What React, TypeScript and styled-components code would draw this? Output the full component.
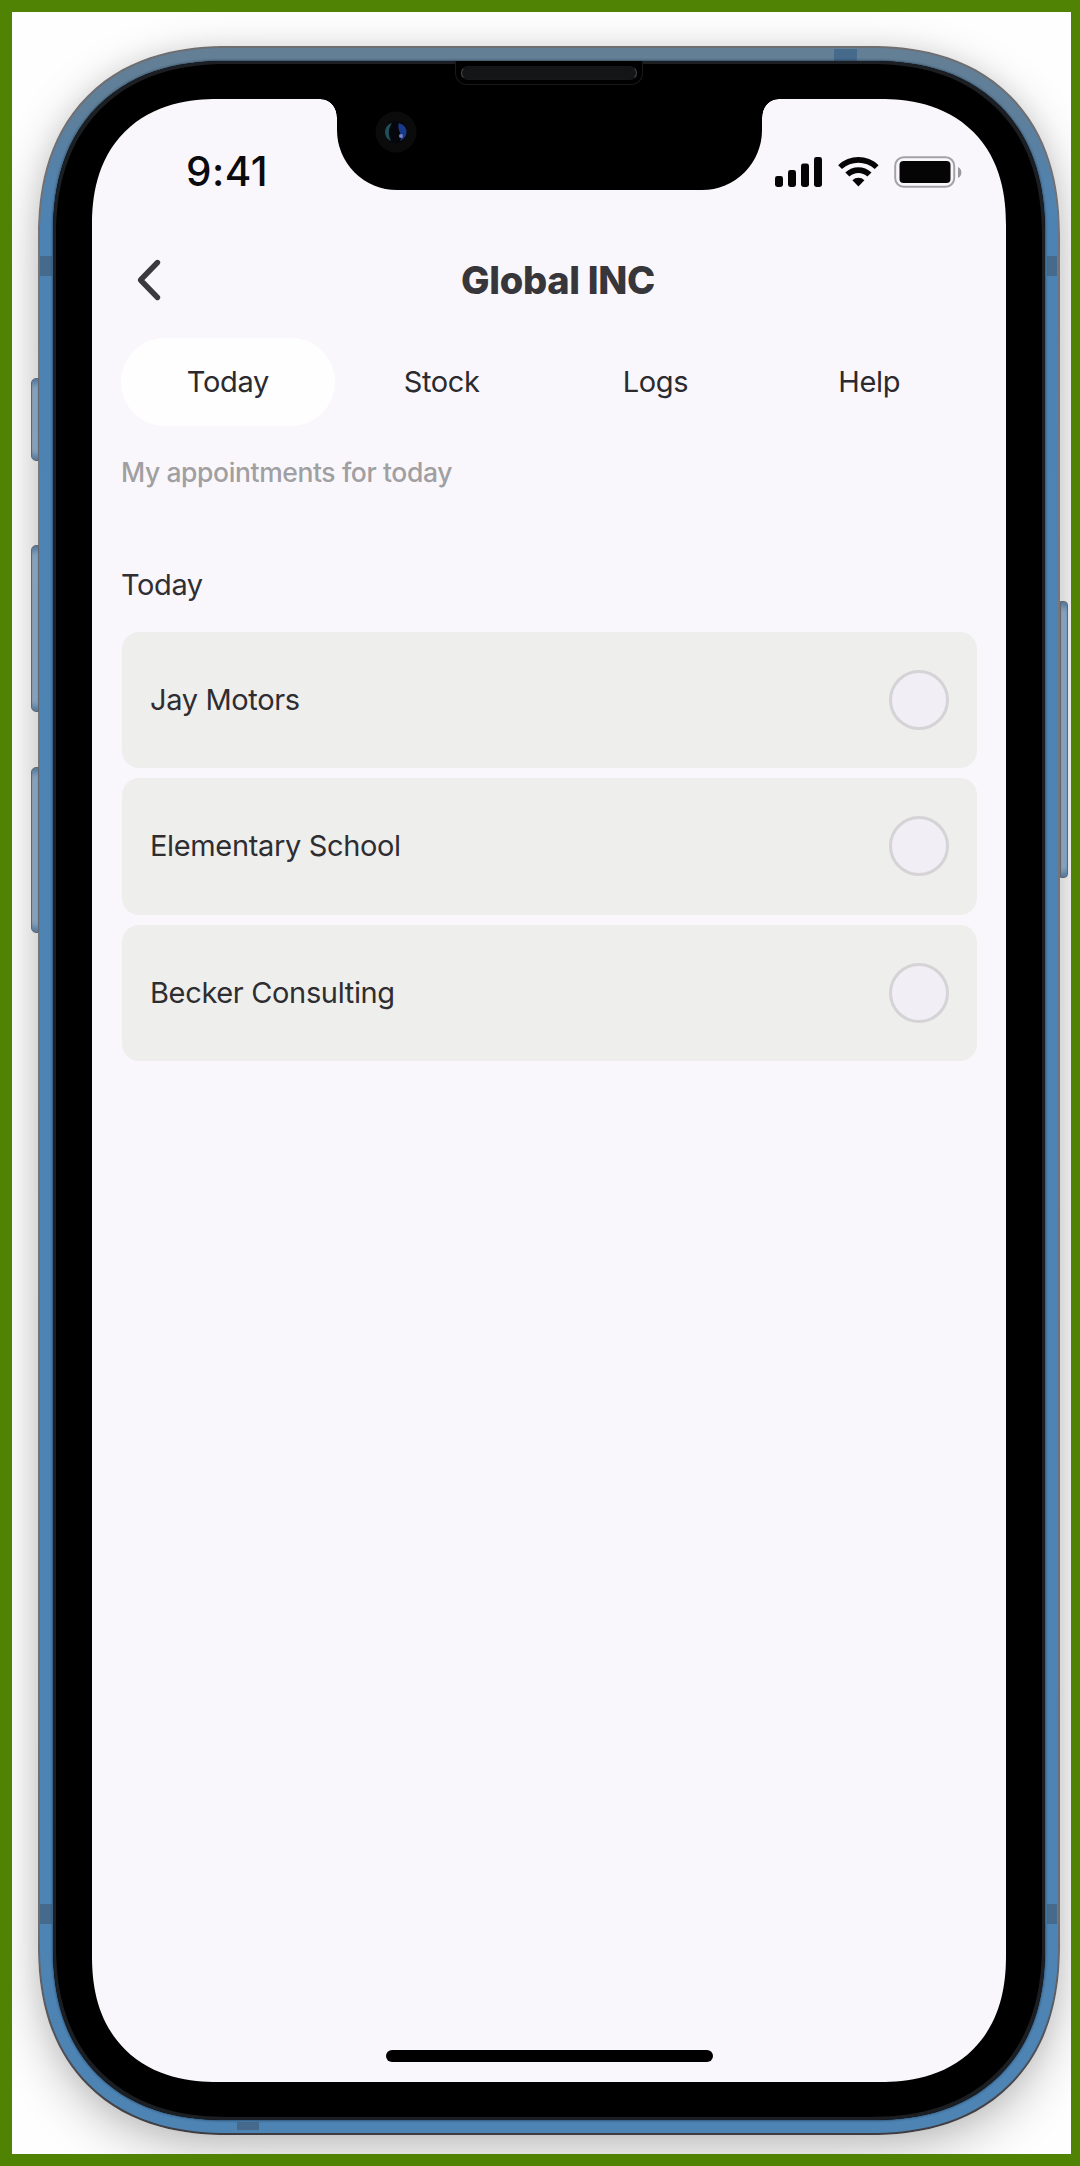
import React, { useState } from "react";
import styled, { createGlobalStyle } from "styled-components";

const GlobalStyle = createGlobalStyle`
  *, *::before, *::after { box-sizing: border-box; }
  body { margin: 0; }
  button { font: inherit; color: inherit; border: 0; background: none; padding: 0; }
`;

const Page = styled.main`
  width: 1080px;
  height: 2166px;
  padding: 12px 9px 12px 12px;
  background: #508204;
  font-family: Inter, "Liberation Sans", sans-serif;
`;

const Backdrop = styled.div`
  position: relative;
  height: 100%;
  padding: 34px 11px 19px 26px;
  background: #fefefe;
  overflow: hidden;
`;

const SideButton = styled.span<{ $side: "left" | "right"; $top: number; $height: number }>`
  position: absolute;
  z-index: 1;
  top: ${(p) => p.$top}px;
  ${(p) => (p.$side === "left" ? "left: 19px;" : "right: 3px;")}
  width: 8px;
  height: ${(p) => p.$height}px;
  border: 1px solid #62666c;
  border-radius: ${(p) => (p.$side === "left" ? "5px 0 0 5px" : "0 4px 4px 0")};
  background: linear-gradient(90deg, #98a2ad, #7ba6cf);
  box-shadow: inset 0 8px 6px -4px #4f7599, inset 0 -8px 6px -4px #4f7599;
`;

const smooth = (round: number, soft: number) => `
  border-radius: ${round}px;
  @supports (corner-shape: superellipse(1.2)) {
    border-radius: ${soft}px;
    corner-shape: superellipse(1.2);
  }
`;

const Frame = styled.div`
  position: relative;
  height: 100%;
  padding: 2px;
  background: linear-gradient(#6e6d70, #7a777a 20%, #6e6d72 90%, #3e3c40);
  box-shadow: 0 16px 50px rgba(0, 0, 0, 0.24), 0 0 24px rgba(0, 0, 0, 0.07);
  ${smooth(166, 190)}
`;

const Rail = styled.div`
  position: relative;
  height: 100%;
  padding: 13px;
  background: linear-gradient(#647f95, #5f7f9a 60px, #4d83b3 170px, #4d84b4);
  ${smooth(164, 188)}
`;

const Antenna = styled.i<{ $x: string; $y: string; $w: number; $h: number }>`
  position: absolute;
  ${(p) => p.$x};
  ${(p) => p.$y};
  width: ${(p) => p.$w}px;
  height: ${(p) => p.$h}px;
  background: #466a8b;
`;

const Bezel = styled.div`
  position: relative;
  height: 100%;
  padding: 38px 39px 38px;
  background: #000;
  box-shadow: inset 0 0 0 3px #1b1e22, 0 0 3px #16283a;
  ${smooth(151, 173)}
`;

const Screen = styled.div`
  height: 100%;
  display: flex;
  flex-direction: column;
  background: #faf7fc;
  ${smooth(110, 126)}
`;

const Notch = styled.div`
  position: absolute;
  left: 284px;
  top: 36px;
  width: 425px;
  height: 93px;
  background: #000;
  border-radius: 0 0 60px 60px;

  &::before, &::after {
    content: "";
    position: absolute;
    top: 2px;
    width: 16px;
    height: 18px;
  }
  &::before {
    right: 100%;
    background: radial-gradient(ellipse 16px 18px at 0 100%, transparent 96%, #000 100%);
  }
  &::after {
    left: 100%;
    background: radial-gradient(ellipse 16px 18px at 100% 100%, transparent 96%, #000 100%);
  }
`;

const Earpiece = styled.div`
  position: absolute;
  left: 402px;
  top: 0;
  width: 188px;
  height: 24px;
  padding: 5px;
  border: 1px solid #18191a;
  border-top: 0;
  border-radius: 0 0 12px 12px;
  background: #000;

  &::before {
    content: "";
    display: block;
    height: 14px;
    border-radius: 7px;
    border: 1px solid #1c1d1f;
    border-color: #161718 #4a4b4d;
    background: #131516;
  }
`;

const Camera = styled.svg`
  position: absolute;
  left: 321px;
  top: 49px;
`;

const StatusBar = styled.div`
  display: flex;
  align-items: center;
  justify-content: space-between;
  height: 60px;
  margin-top: 43px;
  padding: 0 41px 0 94px;

  svg {
    margin-top: 3px;
  }
`;

const Clock = styled.time`
  font-size: 40.5px;
  line-height: 48px;
  font-weight: 550;
  letter-spacing: 0.5px;
  color: #0b0b0d;
`;

const NavBar = styled.header`
  display: grid;
  grid-template-columns: 70px 1fr 52px;
  align-items: center;
  height: 60px;
  margin: 48px 30px 0;
`;

const BackButton = styled.button`
  display: flex;
  padding-left: 14px;
`;

const Title = styled.h1`
  margin: 0;
  font-size: 38px;
  line-height: 48px;
  font-weight: 800;
  letter-spacing: -0.3px;
  text-align: center;
  color: #37363a;
`;

const Tabs = styled.nav`
  display: grid;
  grid-template-columns: repeat(4, 1fr);
  margin: 28px 30px 0 29px;
`;

const Tab = styled.button<{ $active: boolean }>`
  height: 88px;
  padding-bottom: 2px;
  border-radius: 44px;
  background: ${(p) => (p.$active ? "#fefefe" : "transparent")};
  font-size: 29px;
  font-weight: 400;
  letter-spacing: -0.35px;
  color: #2b2a2e;
`;

const Hint = styled.p`
  margin: 28px 29px 0;
  font-size: 26.5px;
  line-height: 36px;
  font-weight: 500;
  letter-spacing: -0.4px;
  color: #a09fa2;
`;

const SectionTitle = styled.h2`
  margin: 77px 29px 0;
  font-size: 29px;
  line-height: 36px;
  font-weight: 400;
  letter-spacing: -0.4px;
  color: #302f33;
`;

const List = styled.ul`
  display: flex;
  flex-direction: column;
  gap: 10px;
  margin: 28.500px 29px 0 30px;
  padding: 0;
  list-style: none;
`;

const Row = styled.li`
  display: flex;
  align-items: center;
  justify-content: space-between;
  height: 136.6px;
  padding: 0 28px;
  border-radius: 17px;
  background: #eeeeec;
`;

const Name = styled.span`
  padding-bottom: 1px;
  font-size: 29px;
  font-weight: 400;
  letter-spacing: -0.35px;
  color: #2e2d31;
`;

const Check = styled.button`
  width: 60px;
  height: 60px;
  border: 3px solid #d5d3d6;
  border-radius: 50%;
  background: #f1eef5;
`;

const HomeIndicator = styled.div`
  width: 327px;
  height: 12px;
  margin: auto auto 20px;
  border-radius: 6px;
  background: #000;
`;

const StatusIcons = () => (
  <svg width="190" height="36" viewBox="0 0 190 36" fill="#050506">
    <rect x="0" y="20" width="8" height="11" rx="2.4" />
    <rect x="13" y="14" width="8" height="17" rx="2.4" />
    <rect x="26" y="7.500" width="8" height="23.500" rx="2.4" />
    <rect x="39" y="1" width="8" height="30" rx="2.4" />
    <path d="M63.200 9.200C74.500-1.600 92.300-1.600 103.600 9.200L99.800 13C90.500 4.600 76.300 4.600 67 13Z" />
    <path d="M70.300 16.400C77.700 9.500 89.100 9.500 96.500 16.400L92.400 20.500C87.400 15.800 79.400 15.800 74.400 20.500Z" />
    <path d="M77.400 24.200C80.900 20.900 85.900 20.900 89.400 24.200L83.400 30.600Z" />
    <rect x="120.200" y="1.200" width="59" height="29.600" rx="8.500" fill="none" stroke="#a3a2a5" strokeWidth="2" />
    <rect x="124.500" y="5" width="51" height="22" rx="4" />
    <path d="M183 11C187.500 13 187.500 20 183 22Z" fill="#99989b" />
  </svg>
);

const tabs = ["Today", "Stock", "Logs", "Help"];
const appointments = ["Jay Motors", "Elementary School", "Becker Consulting"];

export default function App() {
  const [active, setActive] = useState("Today");
  return (
    <Page>
      <GlobalStyle />
      <Backdrop>
        <SideButton $side="left" $top={366} $height={83} />
        <SideButton $side="left" $top={533} $height={167} />
        <SideButton $side="left" $top={755} $height={166} />
        <SideButton $side="right" $top={589} $height={277} />
        <Frame>
          <Rail>
            <Antenna $x="left: 0" $y="top: 208px" $w={12} $h={20} />
            <Antenna $x="right: 1px" $y="top: 208px" $w={10} $h={20} />
            <Antenna $x="left: 0" $y="bottom: 209px" $w={12} $h={20} />
            <Antenna $x="right: 1px" $y="bottom: 209px" $w={10} $h={20} />
            <Antenna $x="right: 201px" $y="top: 1px" $w={23} $h={12} />
            <Antenna $x="left: 197px" $y="bottom: 3px" $w={22} $h={8} />
            <Bezel>
              <Earpiece />
              <Screen>
                <StatusBar>
                  <Clock>9:41</Clock>
                  <StatusIcons />
                </StatusBar>
                <NavBar>
                  <BackButton aria-label="Back">
                    <svg width="30" height="44" viewBox="0 0 30 44" fill="none" stroke="#3a393c" strokeWidth="5.400" strokeLinecap="round" strokeLinejoin="round">
                      <path d="M21.500 4.500L4.500 22L21.500 39.500" />
                    </svg>
                  </BackButton>
                  <Title>Global INC</Title>
                </NavBar>
                <Tabs>
                  {tabs.map((t) => (
                    <Tab key={t} $active={t === active} onClick={() => setActive(t)}>
                      {t}
                    </Tab>
                  ))}
                </Tabs>
                <Hint>My appointments for today</Hint>
                <SectionTitle>Today</SectionTitle>
                <List>
                  {appointments.map((name) => (
                    <Row key={name}>
                      <Name>{name}</Name>
                      <Check aria-label={`Complete ${name}`} />
                    </Row>
                  ))}
                </List>
                <HomeIndicator />
              </Screen>
              <Notch />
              <Camera width="44" height="44" viewBox="0 0 44 44">
                <circle cx="22" cy="22" r="20.500" fill="#0b0b0c" />
                <circle cx="22" cy="22" r="11" fill="#05070c" />
                <path d="M18 13C9 15 9 28 17 31C14 25 14 19 18 13Z" fill="#1f505a" />
                <path d="M25 13C35 16 35 27 26 31C30 25 22 20 25 13Z" fill="#19398a" />
                <circle cx="27" cy="26" r="2" fill="#7b7fc4" />
              </Camera>
            </Bezel>
          </Rail>
        </Frame>
      </Backdrop>
    </Page>
  );
}
